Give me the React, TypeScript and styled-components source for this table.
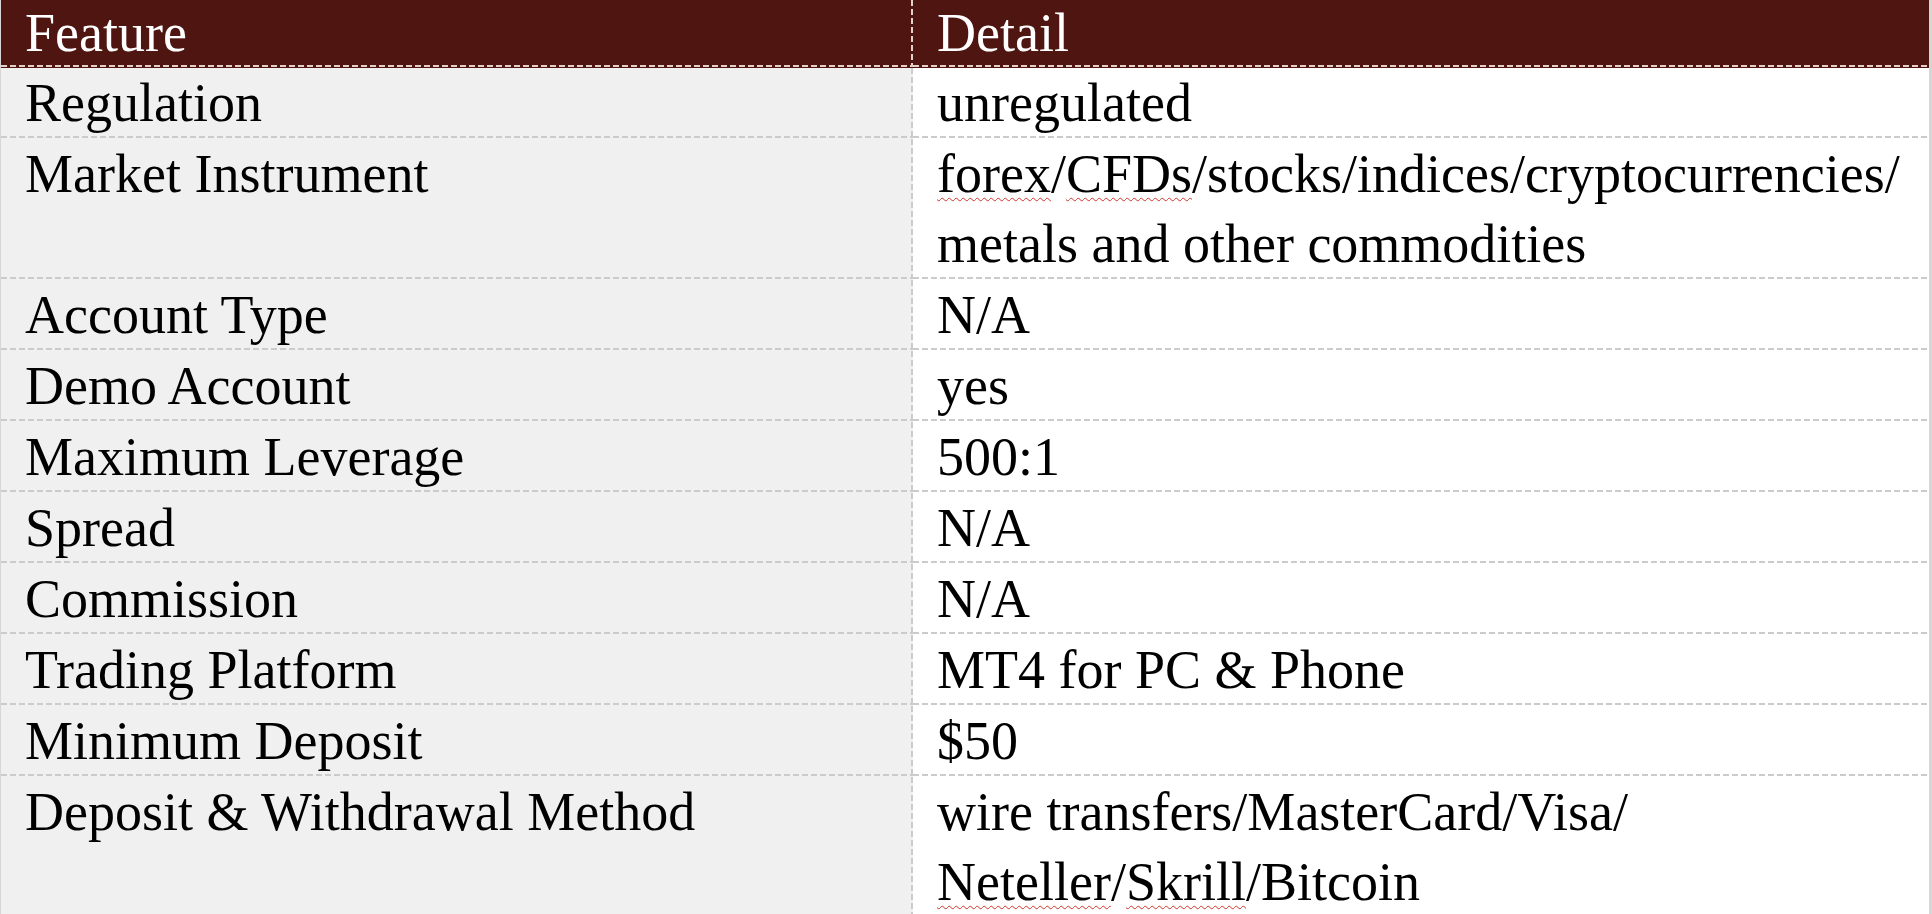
import React from 'react';
import styled, { createGlobalStyle, css } from 'styled-components';

const GlobalStyle = createGlobalStyle`
  html, body {
    margin: 0;
    padding: 0;
    background: #fff;
  }
  body {
    font-family: 'Liberation Serif', 'Times New Roman', serif;
    overflow: hidden;
  }
`;

const rows: { feature: string; detail: React.ReactNode }[] = [
  { feature: 'Regulation', detail: 'unregulated' },
  {
    feature: 'Market Instrument',
    detail: (
      <>
        <Flag>forex</Flag>/<Flag>CFDs</Flag>/stocks/indices/cryptocurrencies/
        <br />
        metals and other commodities
      </>
    )
  },
  { feature: 'Account Type', detail: 'N/A' },
  { feature: 'Demo Account', detail: 'yes' },
  { feature: 'Maximum Leverage', detail: '500:1' },
  { feature: 'Spread', detail: 'N/A' },
  { feature: 'Commission', detail: 'N/A' },
  { feature: 'Trading Platform', detail: 'MT4 for PC & Phone' },
  { feature: 'Minimum Deposit', detail: '$50' },
  {
    feature: 'Deposit & Withdrawal Method',
    detail: (
      <>
        wire transfers/MasterCard/Visa/
        <br />
        <Flag>Neteller</Flag>/<Flag>Skrill</Flag>/Bitcoin
      </>
    )
  }
];

export default function App() {
  return (
    <>
      <GlobalStyle />
      <Sheet>
        <HeadCell $first>Feature</HeadCell>
        <HeadCell>Detail</HeadCell>
        {rows.map((row) => (
          <React.Fragment key={row.feature}>
            <FeatureCell>{row.feature}</FeatureCell>
            <DetailCell>{row.detail}</DetailCell>
          </React.Fragment>
        ))}
      </Sheet>
    </>
  );
}

function Flag({ children }: { children: React.ReactNode }) {
  return <Squiggle>{children}</Squiggle>;
}

// word-style dashed gridlines, drawn as gradients so the dash rhythm matches
const hLine = (color: string) =>
  `repeating-linear-gradient(90deg, ${color} 0 6px, transparent 6px 9px)`;
const vLine = (color: string) =>
  `repeating-linear-gradient(180deg, ${color} 0 6px, transparent 6px 9px)`;

const gridLines = (color: string, right: boolean) => css`
  background-image: ${right ? `${hLine(color)}, ${vLine(color)}` : hLine(color)};
  background-size: ${right ? '100% 2px, 2px 100%' : '100% 2px'};
  background-position: ${right ? 'left bottom, right top' : 'left bottom'};
  background-repeat: no-repeat;
`;

const Sheet = styled.div`
  display: grid;
  grid-template-columns: 912px 1fr;
  border-left: 1px solid #d6d6d6;
  border-right: 3px solid #d6d6d6;
  font-family: 'Liberation Serif', 'Times New Roman', serif;
  font-size: 54px;
  color: #000;
`;

const Cell = styled.div`
  box-sizing: border-box;
  padding: 0 24px;
  line-height: 70px;
  border-bottom: 1px solid transparent;
  white-space: nowrap;
`;

const HeadCell = styled(Cell)<{ $first?: boolean }>`
  background-color: #4f1510;
  color: #fff;
  line-height: 67px;
  ${(p) => gridLines('#e4cfca', !!p.$first)}
`;

const FeatureCell = styled(Cell)`
  background-color: #f0f0f0;
  ${gridLines('#cbcbcb', true)}
`;

const DetailCell = styled(Cell)`
  background-color: #fff;
  ${gridLines('#cbcbcb', false)}
`;

const Squiggle = styled.span`
  text-decoration: underline wavy #d0342c;
  text-decoration-thickness: 1px;
  text-underline-offset: 5px;
  text-decoration-skip-ink: none;
`;
